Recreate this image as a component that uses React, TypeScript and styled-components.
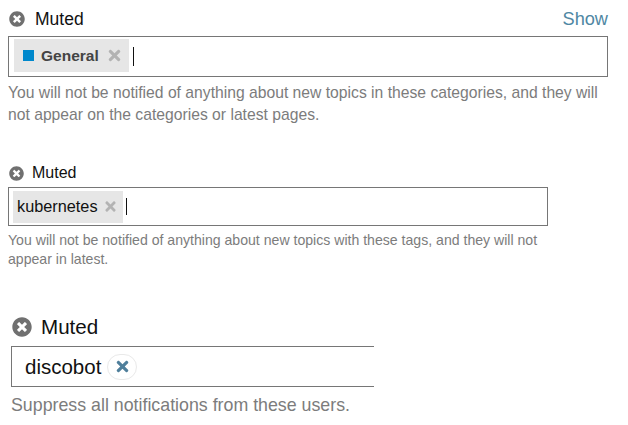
import React from "react";
import styled, { createGlobalStyle } from "styled-components";
import { FaTimes, FaTimesCircle } from "react-icons/fa";

const GlobalStyle = createGlobalStyle`
    html, body {
        margin: 0;
        padding: 0;
        background: #fff;
        font-family: "Liberation Sans", Arial, sans-serif;
    }
`;

const Page = styled.div`
    width: 628px;
    height: 425px;
    overflow: hidden;
    display: flex;
    flex-direction: column;
`;

const Section = styled.section<{ $top: number; $left: number; $width: number }>`
    margin-top: ${(p) => p.$top}px;
    margin-left: ${(p) => p.$left}px;
    width: ${(p) => p.$width}px;
`;

const Header = styled.div<{ $size: number; $gap: number; $height: number }>`
    display: flex;
    align-items: center;
    gap: ${(p) => p.$gap}px;
    height: ${(p) => p.$height}px;
    font-size: ${(p) => p.$size}px;
    color: #111;
`;

const MutedIcon = styled(FaTimesCircle)<{ $size: number }>`
    width: ${(p) => p.$size}px;
    height: ${(p) => p.$size}px;
    color: #707070;
    margin-left: 1px;
    flex: none;
`;

const ShowLink = styled.a`
    margin-left: auto;
    color: #4f87a3;
    font-size: 18.2px;
`;

const Field = styled.div<{ $height: number; $gapTop: number; $open?: boolean }>`
    display: flex;
    align-items: center;
    box-sizing: border-box;
    height: ${(p) => p.$height}px;
    margin-top: ${(p) => p.$gapTop}px;
    border: 1px solid #767676;
    border-right: ${(p) => (p.$open ? "none" : "1px solid #767676")};
`;

const Chip = styled.div<{ $left: number; $lift: number; $width: number; $height: number; $size: number; $bold?: boolean }>`
    display: flex;
    align-items: center;
    box-sizing: border-box;
    width: ${(p) => p.$width}px;
    height: ${(p) => p.$height}px;
    margin-left: ${(p) => p.$left}px;
    margin-bottom: ${(p) => p.$lift}px;
    padding-left: 4px;
    background: #e6e6e6;
    font-size: ${(p) => p.$size}px;
    font-weight: ${(p) => (p.$bold ? "bold" : "normal")};
    color: ${(p) => (p.$bold ? "#444" : "#111")};
`;

const Swatch = styled.span`
    width: 11px;
    height: 11px;
    margin: 0 7px 0 5px;
    background: #0088cc;
    flex: none;
`;

const ChipClose = styled(FaTimes)<{ $size: number; $gap: number }>`
    width: ${(p) => p.$size}px;
    height: ${(p) => p.$size}px;
    margin-left: ${(p) => p.$gap}px;
    color: #b3b3b3;
    flex: none;
`;

const Caret = styled.span<{ $height: number; $gap: number }>`
    width: 1px;
    height: ${(p) => p.$height}px;
    margin-left: ${(p) => p.$gap}px;
    background: #111;
`;

const UserName = styled.span`
    margin-left: 13px;
    font-size: 20.5px;
    color: #111;
`;

const UserRemove = styled.span`
    display: flex;
    align-items: center;
    justify-content: center;
    box-sizing: border-box;
    width: 30px;
    height: 26px;
    margin-left: 6px;
    border: 1px solid #e9e9e9;
    border-radius: 13px;
    color: #4f7f9b;
`;

const RemoveIcon = styled(FaTimes)`
    width: 17px;
    height: 17px;
`;

const Help = styled.p<{ $size: number; $line: number; $top: number }>`
    margin: ${(p) => p.$top}px 0 0;
    font-size: ${(p) => p.$size}px;
    line-height: ${(p) => p.$line}px;
    color: #7c7c7c;
`;

export default function App() {
    return (
        <Page>
            <GlobalStyle />
            <Section $top={8} $left={8} $width={600}>
                <Header $size={17.5} $gap={10} $height={22}>
                    <MutedIcon $size={16} />
                    <span>Muted</span>
                    <ShowLink>Show</ShowLink>
                </Header>
                <Field $height={41} $gapTop={6}>
                    <Chip $left={5} $lift={2} $width={115} $height={33} $size={15.5} $bold>
                        <Swatch />
                        General
                        <ChipClose $size={17} $gap={7} />
                    </Chip>
                    <Caret $height={19} $gap={4} />
                </Field>
                <Help $size={15.7} $line={22} $top={5}>
                    You will not be notified of anything about new topics in these categories, and they will not appear on the categories or latest pages.
                </Help>
            </Section>
            <Section $top={36} $left={8} $width={540}>
                <Header $size={16} $gap={8} $height={22}>
                    <MutedIcon $size={15} />
                    <span>Muted</span>
                </Header>
                <Field $height={39} $gapTop={3}>
                    <Chip $left={4} $lift={0} $width={110} $height={32} $size={16.3}>
                        kubernetes
                        <ChipClose $size={15} $gap={5} />
                    </Chip>
                    <Caret $height={17} $gap={3} />
                </Field>
                <Help $size={14.1} $line={19} $top={5}>
                    You will not be notified of anything about new topics with these tags, and they will not appear in latest.
                </Help>
            </Section>
            <Section $top={45} $left={11} $width={363}>
                <Header $size={20.6} $gap={9} $height={26}>
                    <MutedIcon $size={20} />
                    <span>Muted</span>
                </Header>
                <Field $height={41} $gapTop={6} $open>
                    <UserName>discobot</UserName>
                    <UserRemove>
                        <RemoveIcon />
                    </UserRemove>
                </Field>
                <Help $size={17.8} $line={24} $top={6}>
                    Suppress all notifications from these users.
                </Help>
            </Section>
        </Page>
    );
}
